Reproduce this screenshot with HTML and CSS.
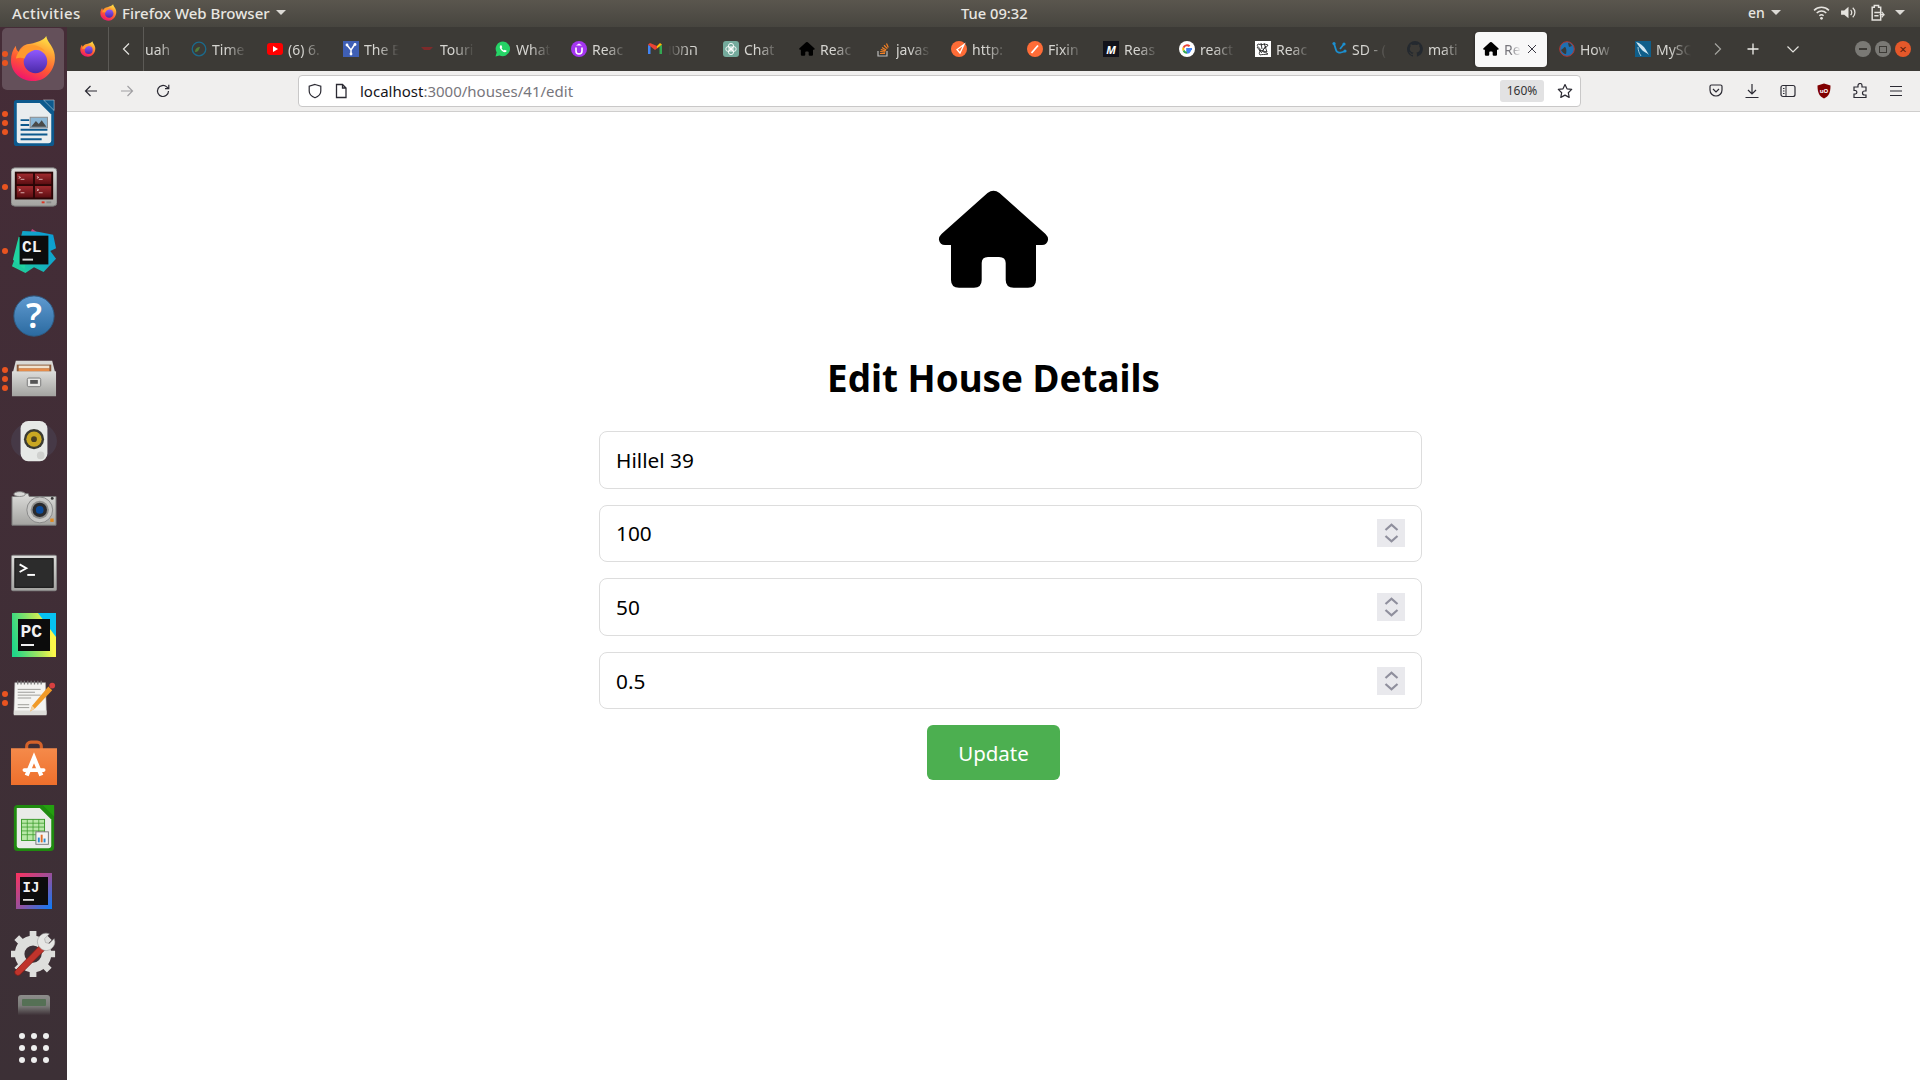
FILE: index.html
```html
<!DOCTYPE html>
<html lang="en">
<head>
<meta charset="utf-8">
<title>Edit House Details</title>
<link rel="stylesheet" href="styles.css">
</head>
<body>
<svg class="defs" aria-hidden="true">
  <defs>
    <linearGradient id="gFox" x1="0.8" y1="0" x2="0.35" y2="1"><stop offset="0" stop-color="#ffe847"/><stop offset=".3" stop-color="#ffa436"/><stop offset=".65" stop-color="#ff5634"/><stop offset="1" stop-color="#f0146e"/></linearGradient>
    <linearGradient id="gPurple" x1="0.5" y1="0" x2="0.5" y2="1"><stop offset="0" stop-color="#9059ff"/><stop offset="1" stop-color="#4a2aa8"/></linearGradient>
    <linearGradient id="gHelp" x1="0" y1="0" x2="0" y2="1"><stop offset="0" stop-color="#5f9ad0"/><stop offset="1" stop-color="#2b6aa0"/></linearGradient>
    <linearGradient id="gPC" x1="0" y1="0.6" x2="1" y2="0.4"><stop offset="0" stop-color="#21d789"/><stop offset=".6" stop-color="#b6e85a"/><stop offset=".85" stop-color="#fcf84a"/><stop offset="1" stop-color="#fcf84a"/></linearGradient>
    <linearGradient id="gCL" x1="0" y1="1" x2="1" y2="0"><stop offset="0" stop-color="#22d88f"/><stop offset=".55" stop-color="#12a8c8"/><stop offset="1" stop-color="#0a9bd6"/></linearGradient>
    <linearGradient id="gIJ" x1="0" y1="0" x2="1" y2="1"><stop offset="0" stop-color="#fe315d"/><stop offset=".5" stop-color="#9a4f9a"/><stop offset="1" stop-color="#087cfa"/></linearGradient>
    <linearGradient id="gStore" x1="0" y1="0" x2="0" y2="1"><stop offset="0" stop-color="#f58a4a"/><stop offset="1" stop-color="#ee6f2c"/></linearGradient>
    <linearGradient id="gMetal" x1="0" y1="0" x2="0" y2="1"><stop offset="0" stop-color="#dcdcda"/><stop offset="1" stop-color="#a3a3a0"/></linearGradient>
    <linearGradient id="gPane" x1="0" y1="0" x2="0" y2="1"><stop offset="0" stop-color="#a02a2e"/><stop offset="1" stop-color="#5c0e12"/></linearGradient>
    <linearGradient id="gDisk" x1="0" y1="0" x2="0" y2="1"><stop offset="0" stop-color="#8d8d8b"/><stop offset=".55" stop-color="#7b7b79"/><stop offset="1" stop-color="#3e3238"/></linearGradient>

    <symbol id="i-fox" viewBox="0 0 48 48">
      <path fill="url(#gFox)" d="M37 1c1 6 6 9 8 16 4 14-6 30-21 30C11 47 1 38 1 26c0-6 2-11 5-15 0 3 1 5 3 6 2-5 7-8 12-8 7-2 13-3 16-8z"/>
      <circle cx="26" cy="27" r="12" fill="url(#gPurple)"/>
      <path fill="#ff9a2e" d="M6 24C8 14 18 9 27 11c4 1 7 3 9 6-4-2-9-3-13-1-5 2-7 5-8 8-3-1-6-1-9 0z"/>
    </symbol>
    <symbol id="i-home" viewBox="0 0 112 100">
      <path d="M49.5 3Q55.5-1.500 61.500 3L107.500 44Q110.500 47 110 50 109 55 104 55H98V90Q98 97.700 90 97.700H75.700Q67.700 97.700 67.700 90V73Q67.700 67 61 67H50Q43.700 67 43.700 73V90Q43.700 97.700 36 97.700H21Q13 97.700 13 90V55H7Q2 55 1 50 .5 47 3.500 44Z"/>
    </symbol>
    <symbol id="i-yt" viewBox="0 0 16 16"><rect y="2" width="16" height="12" rx="3" fill="#f00"/><path d="M6 5l5 3-5 3z" fill="#fff"/></symbol>
    <symbol id="i-time" viewBox="0 0 16 16"><circle cx="8" cy="8" r="6.800" fill="none" stroke="#1b6a8c" stroke-width="1.300"/><path d="M4 11c0-4 3-5 5-5-1 3-2 5-5 5z" fill="#4f7d3a"/></symbol>
    <symbol id="i-v" viewBox="0 0 16 16"><rect width="16" height="16" fill="#3f5fb5"/><path d="M4 4l4 5 4-6M8 9v4" fill="none" stroke="#fff" stroke-width="1.500"/><circle cx="4" cy="4" r="1.400" fill="#fff"/><circle cx="12" cy="3.500" r="1.400" fill="#fff"/><circle cx="8" cy="13" r="1.400" fill="#fff"/></symbol>
    <symbol id="i-tour" viewBox="0 0 16 16"><path d="M2 6h12l-3 3H5z" fill="#7d2b2b"/></symbol>
    <symbol id="i-wa" viewBox="0 0 16 16"><path d="M8 .5a7.300 7.300 0 0 0-6.300 11L.5 15.500l4.100-1.100A7.300 7.300 0 1 0 8 .5z" fill="#25d366"/><path d="M5.500 4.200c-1.200 1-1 3 .8 5s3.800 2.500 4.900 1.500l.5-1-2-1-.8.700c-1-.4-2-1.500-2.300-2.400l.7-.8-.9-2z" fill="#fff"/></symbol>
    <symbol id="i-ud" viewBox="0 0 16 16"><circle cx="8" cy="8" r="8" fill="#a435f0"/><path d="M5 6.500V10a3 3 0 0 0 6 0V6.500" fill="none" stroke="#fff" stroke-width="1.600"/><path d="M8 2.500L5 4.500h6z" fill="#fff"/></symbol>
    <symbol id="i-gm" viewBox="0 0 16 16"><path d="M1 13V4l2.500 1v8z" fill="#4285f4"/><path d="M15 13V4l-2.500 1v8z" fill="#34a853"/><path d="M1 3.500l7 5.500 2-1.500V5L3 2z" fill="#ea4335"/><path d="M15 3.500L10 7.500V5l3-3z" fill="#fbbc05"/></symbol>
    <symbol id="i-gpt" viewBox="0 0 16 16"><rect width="16" height="16" rx="3" fill="#74aa9c"/><g fill="none" stroke="#fff" stroke-width=".9"><circle cx="8" cy="8" r="2.200"/><circle cx="8" cy="5" r="2.600"/><circle cx="8" cy="11" r="2.600"/><circle cx="5.200" cy="8" r="2.400"/><circle cx="10.800" cy="8" r="2.400"/></g></symbol>
    <symbol id="i-so" viewBox="0 0 16 16"><path d="M3 10v5h9v-5" fill="none" stroke="#bcbbbb" stroke-width="1.200"/><path d="M5 12.500h5M5.200 10.500l5 .6M5.800 8.500l4.800 1.400M7 6.500l4.200 2.500M9 4.300l3.400 3.300M11.500 2.500l1.800 4" fill="none" stroke="#f48024" stroke-width="1.200"/></symbol>
    <symbol id="i-http" viewBox="0 0 16 16"><circle cx="8" cy="8" r="8" fill="#ff6c37"/><path d="M13 3.500L6 8.500 9 12z" fill="none" stroke="#fff" stroke-width="1.300"/></symbol>
    <symbol id="i-pm" viewBox="0 0 16 16"><circle cx="8" cy="8" r="8" fill="#ff6c37"/><path d="M4.500 12L11 4.500" stroke="#fff" stroke-width="1.800"/></symbol>
    <symbol id="i-md" viewBox="0 0 16 16"><rect width="16" height="16" fill="#12121a"/><text x="8" y="12.500" text-anchor="middle" class="fav-m">M</text></symbol>
    <symbol id="i-g" viewBox="0 0 16 16"><circle cx="8" cy="8" r="8" fill="#fff"/><path d="M13 8H8.200v1.800h2.700A3.300 3.300 0 0 1 8 11.800" fill="none" stroke="#4285f4" stroke-width="2"/><path d="M8 11.800a3.800 3.800 0 0 1-3.500-2.400" fill="none" stroke="#34a853" stroke-width="2"/><path d="M4.500 9.400a3.800 3.800 0 0 1 0-2.800" fill="none" stroke="#fbbc05" stroke-width="2"/><path d="M4.500 6.600A3.800 3.800 0 0 1 10.600 5.300" fill="none" stroke="#ea4335" stroke-width="2"/></symbol>
    <symbol id="i-scr" viewBox="0 0 16 16"><rect width="16" height="16" fill="#fff"/><path d="M3 3c4 2 7-1 10 1-1 3-4 2-5 5s3 2 5 4c-3 1-6 0-8 1-2-2 1-4 0-6S1 5 3 3zM6 2l1 6M11 5l-5 7M4 9l8 2M2 6l4 5M9 2l3 9" fill="none" stroke="#222" stroke-width=".9"/></symbol>
    <symbol id="i-sd" viewBox="0 0 16 16"><path d="M3 2.500L5 9c.5 2 3 3 5 2.500l3.500-1" fill="none" stroke="#1c8fd0" stroke-width="1.800"/><path d="M13 3L9 8" stroke="#1c8fd0" stroke-width="1.800"/><circle cx="3" cy="2.500" r="1.600" fill="#1c8fd0"/><circle cx="13" cy="3" r="1.600" fill="#1c8fd0"/><circle cx="14" cy="10" r="1.600" fill="#1c8fd0"/></symbol>
    <symbol id="i-gh" viewBox="0 0 16 16"><path d="M8 0a8 8 0 0 0-2.500 15.600c.4.100.5-.2.500-.4v-1.400c-2.200.5-2.700-1-2.700-1-.4-.9-.9-1.200-.9-1.200-.7-.5.100-.5.100-.5.800.100 1.200.8 1.200.8.700 1.200 1.900.9 2.300.7.100-.5.300-.9.500-1.100-1.800-.2-3.700-.9-3.700-4 0-.9.300-1.600.8-2.100 0-.2-.3-1 .1-2.100 0 0 .7-.2 2.200.8a7.600 7.600 0 0 1 4 0c1.500-1 2.200-.8 2.200-.8.400 1.100.2 1.900.1 2.100.5.600.8 1.300.8 2.100 0 3.100-1.900 3.800-3.700 4 .3.300.6.800.6 1.500v2.200c0 .2.100.5.500.4A8 8 0 0 0 8 0z" fill="#24292f"/></symbol>
    <symbol id="i-how" viewBox="0 0 16 16"><circle cx="8" cy="8" r="7.300" fill="#1f6fb0" stroke="#b8342c" stroke-width="1"/><path d="M2 9c2-1 3-3 4-3s2 4 1 7c-2 0-4-2-5-4zM9 2c2 0 3 1 4 3l-3 1z" fill="#3a3a36"/></symbol>
    <symbol id="i-my" viewBox="0 0 16 16"><rect width="16" height="16" fill="#0f5e8a"/><path d="M1 1c4 1 8 4 10 8l3 5c-3-3-5-3-7-5S3 4 1 1z" fill="#cfe6f2"/><path d="M3 6c0 3 1 6 3 9" fill="none" stroke="#cfe6f2" stroke-width=".8"/></symbol>
  </defs>
</svg>

<header class="topbar">
  <div class="top-left">
    <span class="top-activities">Activities</span>
    <svg class="top-fox"><use href="#i-fox"/></svg>
    <span>Firefox Web Browser</span>
    <span class="caret"></span>
  </div>
  <div class="top-clock">Tue 09:32</div>
  <div class="top-right">
    <span class="top-lang">en</span>
    <span class="caret"></span>
    <svg class="tray tray-wifi" viewBox="0 0 16 16"><path d="M1 6a10 10 0 0 1 14 0M3.500 8.500a6.500 6.500 0 0 1 9 0M6 11a3 3 0 0 1 4 0" fill="none" stroke="#e6e4df" stroke-width="1.400"/><circle cx="8" cy="13.500" r="1.300" fill="#e6e4df"/></svg>
    <svg class="tray tray-vol" viewBox="0 0 16 16"><path d="M1 6h3l4-3.500v11L4 10H1z" fill="#e6e4df"/><path d="M10 5.500a3.500 3.500 0 0 1 0 5M12 3.500a6 6 0 0 1 0 9" fill="none" stroke="#e6e4df" stroke-width="1.200"/></svg>
    <svg class="tray tray-bat" viewBox="0 0 16 16"><path d="M5 1.500h4V3h2v12H3V3h2z" fill="none" stroke="#e6e4df" stroke-width="1.400"/><path d="M5 8h6M5 11h4" stroke="#e6e4df" stroke-width="1.400"/><path d="M10 10l4 0-2-2.500M14 10l-2 2.500" fill="none" stroke="#e6e4df" stroke-width="1.200"/></svg>
    <span class="caret caret--end"></span>
  </div>
</header>

<div class="desktop">
  <nav class="dock">
    <div class="dock-item dock-item--active r-63">
      <div class="dots"><i></i><i></i></div>
      <svg class="d-fox"><use href="#i-fox"/></svg>
    </div>
    <div class="dock-item r-66">
      <div class="dots"><i></i><i></i><i></i></div>
      <svg class="d-icon" viewBox="0 0 48 48"><rect x="3" y="0" width="42" height="48" rx="3" fill="#0d5a8e"/><path d="M6 3h24l12 12v27a3 3 0 0 1-3 3H9a3 3 0 0 1-3-3z" fill="#e9edef"/><path d="M34 0h11v11z" fill="#0d5a8e" stroke="#e9edef" stroke-width=".5"/><path d="M10 20h9v2h-9zM10 25h9v2h-9zM10 30h28v2H10zM10 35h28v2H10zM10 40h22v2H10z" fill="#0d5a8e"/><rect x="20" y="18" width="18" height="11" fill="#8ab7d6" stroke="#8a8a8a"/><path d="M21 28l5-6 3 3 3-4 5 7z" fill="#4a4a48"/></svg>
    </div>
    <div class="dock-item r-61">
      <div class="dots"><i></i></div>
      <svg class="d-icon" viewBox="0 0 48 40"><rect x="0" y="0" width="48" height="40" rx="4" fill="url(#gMetal)" stroke="#777"/><rect x="4" y="4" width="40" height="29" fill="#2a0606"/><g fill="url(#gPane)"><rect x="6" y="6" width="17" height="11"/><rect x="25" y="6" width="17" height="11"/><rect x="6" y="19" width="17" height="12"/><rect x="25" y="19" width="17" height="12"/></g><path d="M8 9l2 1-2 1M10 12h4M27 9l2 1-2 1M29 12h4M8 22l2 1-2 1M10 26h4M27 22l2 1-2 1M29 26h4" fill="none" stroke="#f3d8d8" stroke-width=".8"/><rect x="32" y="35" width="3" height="2" fill="#d32"/><rect x="37" y="35" width="5" height="2" fill="#888"/></svg>
    </div>
    <div class="dock-item r-67">
      <div class="dots"><i></i></div>
      <svg class="d-icon" viewBox="0 0 48 48"><path d="M22 1l8 5-3 8-10-2z" fill="#c8437f"/><path d="M12 3l16 1 16 3 3 14-6 3 6 8-13 14-10-5-9 6-14-7L6 26z" fill="url(#gCL)"/><path d="M2 33L8 9l12 4-6 30z" fill="#1fd4a0"/><rect x="9" y="8" width="30" height="30" fill="#0c0c0c"/><text x="11.500" y="25" class="d-mono d-mono--cl">CL</text><rect x="12" y="32" width="11" height="2" fill="#ddd"/></svg>
    </div>
    <div class="dock-item r-64">
      <svg class="d-icon" viewBox="0 0 48 48"><circle cx="24" cy="24" r="21" fill="url(#gHelp)" stroke="#2d5c85"/><text x="24" y="37" text-anchor="middle" class="d-help">?</text></svg>
    </div>
    <div class="dock-item r-62">
      <div class="dots"><i></i><i></i><i></i></div>
      <svg class="d-icon d-icon--files" viewBox="0 0 48 38"><path d="M5 0h38l3 12H2z" fill="#d9d9d6"/><rect x="6" y="4" width="36" height="8" fill="#8a5a3a"/><rect x="8" y="5" width="32" height="3" fill="#f0e3d0"/><rect x="8" y="8" width="32" height="3" fill="#e58c4a"/><rect x="1" y="11" width="46" height="26" fill="url(#gMetal)"/><rect x="17" y="18" width="14" height="9" rx="1.500" fill="#e8e8e6" stroke="#777"/><rect x="20" y="20" width="8" height="4" fill="#555"/></svg>
    </div>
    <div class="dock-item r-64">
      <svg class="d-icon" viewBox="0 0 48 46"><ellipse cx="24" cy="22" rx="24" ry="20" fill="#5a6a85" opacity=".2"/><rect x="10" y="1" width="28" height="42" rx="8" fill="#e6e8e6"/><circle cx="24" cy="20" r="10.500" fill="#3a3a32"/><circle cx="24" cy="20" r="8" fill="#c9a722"/><circle cx="24" cy="20" r="3" fill="#4a4020"/><circle cx="31" cy="37" r="4" fill="#cfd0ce"/></svg>
    </div>
    <div class="dock-item r-68">
      <svg class="d-icon" viewBox="0 0 48 36"><path d="M1 6h6l1-3h10l1 3h28v30H1z" fill="url(#gMetal)" stroke="#777"/><ellipse cx="9" cy="3.500" rx="6" ry="2.500" fill="#d8d8d6" stroke="#888"/><circle cx="30" cy="20" r="13.500" fill="#c8c8c6" stroke="#888"/><circle cx="30" cy="20" r="9.500" fill="#8f8f8d"/><circle cx="30" cy="20" r="7.500" fill="#2a2a2c"/><circle cx="30" cy="20" r="4" fill="#0a4a9a"/><rect x="41" y="29" width="3.500" height="3.500" fill="#e08a20"/><circle cx="43" cy="8" r="1.500" fill="#333"/></svg>
    </div>
    <div class="dock-item r-61">
      <svg class="d-icon" viewBox="0 0 48 38"><rect x=".5" y=".5" width="47" height="37" rx="1.500" fill="url(#gMetal)" stroke="#888"/><rect x="4" y="4" width="40" height="30" fill="#2c2c2c" stroke="#111"/><path d="M9 10l7 4-7 4" fill="none" stroke="#fff" stroke-width="2"/><rect x="17" y="20" width="8" height="2" fill="#fff"/></svg>
    </div>
    <div class="dock-item r-64">
      <svg class="d-icon d-icon--sq" viewBox="0 0 44 44"><rect width="44" height="44" fill="url(#gPC)"/><path d="M26 0h18v24z" fill="#07c3f2"/><rect x="6" y="6" width="32" height="32" fill="#0c0c0c"/><text x="8.500" y="24" class="d-mono d-mono--pc">PC</text><rect x="9" y="31" width="13" height="2" fill="#eee"/></svg>
    </div>
    <div class="dock-item r-62">
      <div class="dots"><i></i><i></i></div>
      <svg class="d-icon" viewBox="0 0 48 38"><path d="M4 3h32l1 33H3z" fill="#f4f4f2" stroke="#aaa" stroke-width=".6"/><path d="M3 32h34v5H3z" fill="#dcdcd8"/><path d="M7 1v4M10.500 1v4M14 1v4M17.500 1v4M21 1v4M24.500 1v4M28 1v4M31.500 1v4" stroke="#777" stroke-width="1.300"/><path d="M7 10h24M7 13h18M7 16h24M7 19h14M7 26h12M7 29h12" stroke="#9a9a96" stroke-width="1"/><path d="M20 33l2-6 17-20 4 4-18 19z" fill="#f09a28"/><path d="M20 33l2-6 3 3z" fill="#f1d4a6"/><circle cx="43" cy="6" r="3" fill="#d84040"/></svg>
    </div>
    <div class="dock-item r-68">
      <svg class="d-icon" viewBox="0 0 44 44"><path d="M15 12V6a4 4 0 0 1 4-4h6a4 4 0 0 1 4 4v6" fill="none" stroke="#d4622a" stroke-width="3"/><path d="M0 8h44v35H0z" fill="url(#gStore)"/><path d="M15 34l7-17 7 17" fill="none" stroke="#fff" stroke-width="4"/><rect x="11" y="27" width="22" height="3.500" rx="1.700" fill="#fff"/></svg>
    </div>
    <div class="dock-item r-61">
      <svg class="d-icon" viewBox="0 0 48 48"><rect x="3" y="0" width="42" height="48" rx="4" fill="#1f8a0f"/><path d="M6 3h24l12 12v27a3 3 0 0 1-3 3H9a3 3 0 0 1-3-3z" fill="#e9ebe8"/><path d="M33 0h12v12z" fill="#24a010"/><rect x="11" y="15" width="24" height="22" fill="#b8e8a8" stroke="#3a9a2a"/><path d="M11 19h24M11 23h24M11 27h24M11 31h24M17 15v22M23 15v22M29 15v22" stroke="#3a9a2a" stroke-width=".8"/><rect x="26" y="28" width="13" height="13" fill="#f4f4f4" stroke="#777"/><rect x="28" y="34" width="2" height="5" fill="#2a8ad0"/><rect x="31" y="31" width="2" height="8" fill="#e0702a"/><rect x="34" y="35" width="2" height="4" fill="#2a8ad0"/></svg>
    </div>
    <div class="dock-item r-65">
      <svg class="d-icon d-icon--ij" viewBox="0 0 36 36"><rect width="36" height="36" fill="url(#gIJ)"/><rect x="4" y="4" width="28" height="28" fill="#0c0c0c"/><text x="6.500" y="19" class="d-mono d-mono--ij">IJ</text><rect x="7" y="26" width="11" height="1.800" fill="#ddd"/></svg>
    </div>
    <div class="dock-item r-61">
      <svg class="d-icon" viewBox="0 0 48 48"><circle cx="23" cy="24" r="14" fill="none" stroke="#dededc" stroke-width="10"/><path d="M23 0v48M0 24h46M6 7l34 34M40 7L6 41" stroke="#dededc" stroke-width="7" stroke-dasharray="7 34"/><path d="M4 42L30 15l5 5L9 46a3.500 3.500 0 0 1-5-4z" fill="#c0342c" stroke="#7c1d18" stroke-width=".8"/><path d="M29 16a9 9 0 0 1 11-13l-5 5 1 4 4 1 5-5a9 9 0 0 1-13 11z" fill="#e6e6e4" stroke="#999" stroke-width=".6"/></svg>
    </div>
    <div class="dock-item r-42">
      <svg class="d-disk" viewBox="0 0 32 20"><path d="M3 0h26a3 3 0 0 1 3 3v17H0V3a3 3 0 0 1 3-3z" fill="url(#gDisk)"/><rect x="4" y="4" width="24" height="7" rx="1" fill="#557055"/></svg>
    </div>
    <div class="dock-item r-44">
      <div class="app-grid"><i></i><i></i><i></i><i></i><i></i><i></i><i></i><i></i><i></i></div>
    </div>
  </nav>

  <div class="browser">
    <div class="tabbar">
      <div class="pinned"><svg class="fav"><use href="#i-fox"/></svg></div>
      <div class="tab-scroll"><svg class="chev" viewBox="0 0 16 16"><path d="M10 2.500L4.500 8l5.500 5.500" fill="none" stroke="#e4e3df" stroke-width="1.200"/></svg></div>
      <div class="strip">
        <div class="tab tab--cut"><span class="label">uah</span></div>
        <div class="tab"><svg class="fav"><use href="#i-time"/></svg><span class="label">Time</span></div>
        <div class="tab"><svg class="fav"><use href="#i-yt"/></svg><span class="label">(6) 6.</span></div>
        <div class="tab"><svg class="fav"><use href="#i-v"/></svg><span class="label">The E</span></div>
        <div class="tab"><svg class="fav"><use href="#i-tour"/></svg><span class="label">Touri</span></div>
        <div class="tab"><svg class="fav"><use href="#i-wa"/></svg><span class="label">What</span></div>
        <div class="tab"><svg class="fav"><use href="#i-ud"/></svg><span class="label">Reac</span></div>
        <div class="tab"><svg class="fav"><use href="#i-gm"/></svg><span class="label label--rtl" dir="rtl">המטו</span></div>
        <div class="tab"><svg class="fav"><use href="#i-gpt"/></svg><span class="label">Chat</span></div>
        <div class="tab"><svg class="fav"><use href="#i-home"/></svg><span class="label">Reac</span></div>
        <div class="tab"><svg class="fav"><use href="#i-so"/></svg><span class="label">javas</span></div>
        <div class="tab"><svg class="fav"><use href="#i-http"/></svg><span class="label">http:</span></div>
        <div class="tab"><svg class="fav"><use href="#i-pm"/></svg><span class="label">Fixin</span></div>
        <div class="tab"><svg class="fav"><use href="#i-md"/></svg><span class="label">Reas</span></div>
        <div class="tab"><svg class="fav"><use href="#i-g"/></svg><span class="label">react</span></div>
        <div class="tab"><svg class="fav"><use href="#i-scr"/></svg><span class="label">Reac</span></div>
        <div class="tab"><svg class="fav"><use href="#i-sd"/></svg><span class="label">SD - (</span></div>
        <div class="tab"><svg class="fav"><use href="#i-gh"/></svg><span class="label">mati</span></div>
        <div class="tab tab--active"><svg class="fav"><use href="#i-home"/></svg><span class="label label--active">Re</span><svg class="tab-x" viewBox="0 0 12 12"><path d="M2 2l8 8M10 2l-8 8" stroke="#3a3944" stroke-width="1"/></svg></div>
        <div class="tab"><svg class="fav"><use href="#i-how"/></svg><span class="label">How</span></div>
        <div class="tab"><svg class="fav"><use href="#i-my"/></svg><span class="label">MySQ</span></div>
      </div>
      <div class="tab-tools">
        <svg class="chev" viewBox="0 0 16 16"><path d="M6 2.500L11.500 8 6 13.500" fill="none" stroke="#a5a4a0" stroke-width="1.200"/></svg>
        <svg class="chev" viewBox="0 0 16 16"><path d="M8 2.500v11M2.500 8h11" stroke="#f0efeb" stroke-width="1.300"/></svg>
        <svg class="chev" viewBox="0 0 16 16"><path d="M2.500 5.500L8 11l5.500-5.500" fill="none" stroke="#e4e3df" stroke-width="1.200"/></svg>
      </div>
      <div class="win-btns">
        <span class="win-btn"><i class="win-min"></i></span>
        <span class="win-btn"><i class="win-max"></i></span>
        <span class="win-btn win-btn--close">×</span>
      </div>
    </div>

    <div class="toolbar">
      <div class="nav-btns">
        <svg class="tool" viewBox="0 0 16 16"><path d="M14 8H2.500M7.500 3L2.500 8l5 5" fill="none" stroke="#2b2a33" stroke-width="1.200"/></svg>
        <svg class="tool tool--off" viewBox="0 0 16 16"><path d="M2 8h11.500M8.500 3l5 5-5 5" fill="none" stroke="#2b2a33" stroke-width="1.200"/></svg>
        <svg class="tool" viewBox="0 0 16 16"><path d="M13.500 8a5.500 5.500 0 1 1-1.800-4.100L13.500 5.500M13.800 1.800v3.900H10" fill="none" stroke="#2b2a33" stroke-width="1.200"/></svg>
      </div>
      <div class="urlbar">
        <svg class="tool-sm" viewBox="0 0 16 16"><path d="M8 1.500l5.800 1.800V8c0 3.200-2.400 5.500-5.800 6.800C4.600 13.500 2.200 11.200 2.200 8V3.300z" fill="none" stroke="#2b2a33" stroke-width="1.200"/></svg>
        <svg class="tool-sm tool-sm--page" viewBox="0 0 16 16"><path d="M3.500 1.500h6l3.500 3.500v9.500h-9.500zM9.500 1.500V5H13" fill="none" stroke="#2b2a33" stroke-width="1.300"/></svg>
        <div class="url-text"><span class="url-host">localhost</span><span class="url-rest">:3000/houses/41/edit</span></div>
        <div class="zoom-badge">160%</div>
        <svg class="tool-sm tool-sm--star" viewBox="0 0 16 16"><path d="M8 1.500l2 4.300 4.700.6-3.400 3.300.9 4.700L8 12.100l-4.200 2.300.9-4.700L1.300 6.400 6 5.800z" fill="none" stroke="#2b2a33" stroke-width="1.200" stroke-linejoin="round"/></svg>
      </div>
      <div class="tool-btns">
        <svg class="tool" viewBox="0 0 16 16"><path d="M2 3.500A1.500 1.500 0 0 1 3.500 2h9A1.500 1.500 0 0 1 14 3.500V7a6 6 0 0 1-12 0z" fill="none" stroke="#2b2a33" stroke-width="1.200"/><path d="M5 6l3 3 3-3" fill="none" stroke="#2b2a33" stroke-width="1.200"/></svg>
        <svg class="tool" viewBox="0 0 16 16"><path d="M8 1v9.500M4 7l4 4 4-4M1.500 14.500h13" fill="none" stroke="#2b2a33" stroke-width="1.200"/></svg>
        <svg class="tool" viewBox="0 0 16 16"><rect x="1" y="2.500" width="14" height="11" rx="2" fill="none" stroke="#2b2a33" stroke-width="1.200"/><path d="M6 2.500v11M3 5.500h1.500M3 8h1.500M3 10.500h1.500" stroke="#2b2a33" stroke-width="1"/></svg>
        <svg class="tool" viewBox="0 0 16 16"><path d="M8 .5l6.500 2c0 7-1.500 10.500-6.500 13C3 13 1.500 9.500 1.500 2.500z" fill="#800000"/><text x="8" y="9.500" text-anchor="middle" class="ublock">uO</text></svg>
        <svg class="tool" viewBox="0 0 16 16"><path d="M6 2.500a2 2 0 0 1 4 0V4h4v4h-1.500a2 2 0 0 0 0 4H14v2.500H2V11h1.500a1.800 1.800 0 0 0 0-3.500H2V4h4z" fill="none" stroke="#2b2a33" stroke-width="1.200"/></svg>
        <svg class="tool" viewBox="0 0 16 16"><path d="M2 3.500h12M2 8h12M2 12.500h12" stroke="#2b2a33" stroke-width="1.200"/></svg>
      </div>
    </div>

    <main class="page">
      <svg class="house"><use href="#i-home"/></svg>
      <h2 class="title">Edit House Details</h2>
      <form class="form">
        <div class="field">Hillel 39</div>
        <div class="field"><span>100</span><span class="spin"><svg viewBox="0 0 14 20"><path d="M2 7.500L7 3l5 4.500M2 12.500L7 17l5-4.500" fill="none" stroke="#8f8f9d" stroke-width="1.800"/></svg></span></div>
        <div class="field"><span>50</span><span class="spin"><svg viewBox="0 0 14 20"><path d="M2 7.500L7 3l5 4.500M2 12.500L7 17l5-4.500" fill="none" stroke="#8f8f9d" stroke-width="1.800"/></svg></span></div>
        <div class="field"><span>0.5</span><span class="spin"><svg viewBox="0 0 14 20"><path d="M2 7.500L7 3l5 4.500M2 12.500L7 17l5-4.500" fill="none" stroke="#8f8f9d" stroke-width="1.800"/></svg></span></div>
        <button class="submit" type="button">Update</button>
      </form>
    </main>
  </div>
</div>
</body>
</html>
```

FILE: styles.css
```css
* { box-sizing: border-box; }
html, body { margin: 0; padding: 0; height: 100%; }
body {
  width: 1920px;
  height: 1080px;
  overflow: hidden;
  font-family: "Noto Sans", "Open Sans", sans-serif;
  background: #fff;
  display: flex;
  flex-direction: column;
}
.defs { position: absolute; width: 0; height: 0; }
.fav-m { font: italic 700 11px "Noto Sans", sans-serif; fill: #fff; }
.ublock { font: 700 6px "Noto Sans", sans-serif; fill: #fff; }

/* top panel */
.topbar {
  height: 27px;
  flex: none;
  display: grid;
  grid-template-columns: 961px 66px 1fr;
  align-items: center;
  padding-bottom: 2px;
  background: linear-gradient(#5a564e, #47453f);
  color: #e8e6e1;
  font-weight: 500;
  font-size: 15px;
  white-space: nowrap;
}
.top-left { display: flex; align-items: center; padding-left: 12px; }
.top-activities { width: 88px; letter-spacing: .4px; }
.top-fox { width: 17px; height: 17px; margin-right: 5px; }
.top-clock { text-align: center; font-size: 14.700px; }
.top-right { display: flex; align-items: center; padding-left: 721px; font-size: 14px; }
.caret {
  width: 0; height: 0;
  margin-left: 6px;
  border-left: 5px solid transparent;
  border-right: 5px solid transparent;
  border-top: 5px solid #dcdad5;
}
.caret--end { margin-left: 9px; }
.tray { width: 17px; height: 17px; }
.tray-wifi { margin-left: 32px; }
.tray-vol { margin-left: 10px; }
.tray-bat { margin-left: 12px; }

/* desktop */
.desktop { flex: 1; display: flex; min-height: 0; }

/* dock */
.dock {
  width: 67px;
  flex: none;
  display: flex;
  flex-direction: column;
  background: linear-gradient(#452c37, #3c3036);
}
.dock-item { position: relative; display: flex; align-items: center; justify-content: center; flex: none; }
.dock-item--active::before {
  content: "";
  position: absolute;
  left: 2px; right: 3px; top: 1px; bottom: 0;
  border-radius: 5px;
  background: #64505a;
}
.dock-item--active svg { position: relative; }
.r-42 { height: 42px; } .r-44 { height: 44px; } .r-61 { height: 61px; } .r-62 { height: 62px; }
.r-63 { height: 63px; } .r-64 { height: 64px; } .r-65 { height: 65px; } .r-66 { height: 66px; }
.r-67 { height: 67px; } .r-68 { height: 68px; }
.dots {
  position: absolute;
  left: 2px; top: 0; bottom: 0;
  display: flex;
  flex-direction: column;
  justify-content: center;
  gap: 3px;
  z-index: 1;
}
.dots i { display: block; width: 6px; height: 6px; border-radius: 50%; background: #e95420; }
.d-fox { width: 47px; height: 47px; }
.d-icon { width: 46px; height: 48px; }
.d-icon--sq { width: 44px; height: 44px; }
.d-icon--ij { width: 36px; height: 36px; }
.d-disk { width: 32px; height: 20px; }
.d-mono { font-family: "Liberation Mono", "DejaVu Sans Mono", monospace; font-weight: 700; fill: #f2f2f2; }
.d-mono--cl { font-size: 17px; }
.d-mono--pc { font-size: 18px; }
.d-mono--ij { font-size: 14px; }
.d-help { font: 600 36px "Noto Sans", sans-serif; fill: #fff; }
.app-grid { display: grid; grid-template-columns: repeat(3, 6px); gap: 6px; }
.app-grid i { display: block; width: 6px; height: 6px; border-radius: 50%; background: #eee; }

/* browser */
.browser { flex: 1; min-width: 0; display: flex; flex-direction: column; }

.tabbar {
  height: 44px;
  flex: none;
  display: flex;
  align-items: center;
  background: #3c3a36;
  color: #d6d5d1;
}
.pinned {
  width: 42px; height: 44px;
  display: flex; align-items: center; justify-content: center;
  border-right: 1px solid #5c5a56;
}
.tab-scroll {
  width: 35px; height: 44px;
  display: flex; align-items: center; justify-content: center;
  padding-left: 2px;
  border-right: 1px solid #5c5a56;
}
.chev { width: 16px; height: 16px; flex: none; }
.fav { width: 16px; height: 16px; flex: none; }
.strip { width: 1556px; display: flex; gap: 4px; overflow: hidden; flex: none; }
.tab {
  width: 72px; height: 35px;
  flex: none;
  display: flex; align-items: center;
  gap: 5px;
  padding: 0 8px;
  border-radius: 4px;
  font-size: 14px;
}
.tab--cut { width: 35px; padding: 0 0 0 1px; }
.tab--active {
  background: #f8f8f8;
  color: #222;
  box-shadow: 0 0 3px rgba(0,0,0,.4);
  padding-right: 9px;
}
.label {
  flex: 1; min-width: 0;
  overflow: hidden;
  white-space: nowrap;
  -webkit-mask-image: linear-gradient(to right, #000 40%, transparent 100%);
  mask-image: linear-gradient(to right, #000 40%, transparent 100%);
}
.label--active { color: #77767c; }
.label--rtl { text-align: left; -webkit-mask-image: linear-gradient(to left, #000 40%, transparent 100%); mask-image: linear-gradient(to left, #000 40%, transparent 100%); }
.tab-x { width: 12px; height: 12px; flex: none; }
.tab-tools { display: flex; align-items: center; padding-left: 9px; gap: 20px; }
.tab-tools .chev:last-child { margin-left: 4px; }
.win-btns { display: flex; gap: 4px; margin-left: 54px; }
.win-btn {
  width: 16px; height: 16px;
  border-radius: 50%;
  background: #7a7975;
  display: flex; align-items: center; justify-content: center;
  color: #5a1d0c;
  font-size: 13px; line-height: 1;
}
.win-btn--close { background: #e5582a; }
.win-min { width: 8px; height: 1.500px; background: #3c3a36; }
.win-max { width: 8px; height: 7px; border: 1px solid #3c3a36; }

.toolbar {
  height: 41px;
  flex: none;
  display: flex;
  align-items: center;
  padding: 0 5px 1px 6px;
  background: #f0efee;
  border-bottom: 1px solid #cfcecd;
}
.nav-btns { display: flex; gap: 20px; width: 108px; padding-left: 10px; }
.tool { width: 16px; height: 16px; flex: none; }
.tool--off { opacity: .4; }
.urlbar {
  margin-left: 117px;
  width: 1283px;
  height: 32px;
  flex: none;
  display: flex;
  align-items: center;
  padding: 0 7px 0 8px;
  background: #fff;
  border: 1px solid #c9c8c8;
  border-radius: 4px;
}
.tool-sm { width: 16px; height: 16px; flex: none; }
.tool-sm--page { margin-left: 10px; }
.tool-sm--star { margin-left: 13px; }
.url-text { flex: 1; margin-left: 11px; font-size: 15px; white-space: nowrap; color: #15141a; }
.url-rest { color: #77767c; }
.zoom-badge {
  width: 44px; height: 22px;
  display: flex; align-items: center; justify-content: center;
  border-radius: 3px;
  background: #e2e2e3;
  color: #333;
  font-size: 12px;
}
.tool-btns { margin-left: 127px; display: flex; gap: 20px; }

/* page */
.page {
  flex: 1;
  display: flex;
  flex-direction: column;
  align-items: center;
  padding-top: 78px;
  background: #fff;
  color: #000;
}
.house { width: 112px; height: 100px; flex: none; }
.title {
  margin: 58px 0 23px;
  height: 60px;
  line-height: 60px;
  font-size: 36.800px;
  font-weight: 700;
}
.form { width: 789px; display: flex; flex-direction: column; gap: 16px; }
.field {
  width: 823px;
  height: 57.600px;
  flex: none;
  display: flex;
  align-items: center;
  justify-content: space-between;
  padding: 0 16px;
  border: 1px solid #ddd;
  border-radius: 8px;
  font-size: 20.800px;
  color: #000;
}
.spin {
  width: 28px; height: 28px;
  display: flex; align-items: center; justify-content: center;
  background: #e9e9ed;
}
.spin svg { width: 17px; height: 24px; }
.submit {
  align-self: center;
  width: 133px;
  height: 55px;
  border: 0;
  border-radius: 6px;
  background: #4caf50;
  color: #fff;
  font-family: inherit;
  font-size: 20.500px;
}
```
